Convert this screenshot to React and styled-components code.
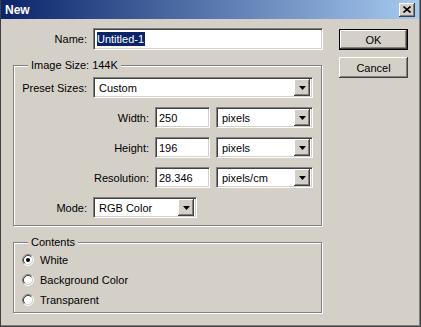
import React from 'react'
import styled, { css, createGlobalStyle } from 'styled-components'

const GlobalStyle = createGlobalStyle`
  html, body {
    margin: 0;
    padding: 0;
    background: #d4d0c8;
  }
  body {
    font-family: "Liberation Sans", Arial, sans-serif;
    font-size: 11px;
    color: #000;
  }
`

const sunken = css`
  box-sizing: border-box;
  background: #fff;
  border-top: 1px solid #808080;
  border-left: 1px solid #808080;
  border-bottom: 1px solid #fff;
  border-right: 1px solid #fff;
  box-shadow: inset 1px 1px 0 #404040, inset -1px -1px 0 #d4d0c8;
`

const raised = css`
  box-sizing: border-box;
  background: #d4d0c8;
  box-shadow: inset -1px -1px 0 #404040, inset 1px 1px 0 #fff,
    inset -2px -2px 0 #808080, inset 2px 2px 0 #d4d0c8;
`

const Window = styled.div`
  width: 421px;
  height: 327px;
  box-sizing: border-box;
  background: #d4d0c8;
  border-left: 1px solid #404040;
  border-right: 1px solid #404040;
  border-bottom: 1px solid #404040;
  box-shadow: inset -1px -1px 0 #808080;
  display: flex;
  flex-direction: column;
`

const TitleBar = styled.div`
  height: 19px;
  flex: none;
  display: flex;
  align-items: center;
  justify-content: space-between;
  padding: 0 4px 0 4px;
  margin-right: 1px;
  background: linear-gradient(to right, #0a246a, #a6caf0);
`

const Title = styled.span`
  color: #fff;
  font-weight: bold;
  font-size: 12px;
`

const CloseButton = styled.div`
  ${raised};
  width: 16px;
  height: 14px;
  display: flex;
  align-items: center;
  justify-content: center;
  padding-bottom: 1px;
`

const Body = styled.div`
  display: flex;
  padding: 9px 0 0 12px;
  gap: 16px;
`

const MainColumn = styled.div`
  width: 310px;
  display: flex;
  flex-direction: column;
`

const ButtonColumn = styled.div`
  display: flex;
  flex-direction: column;
  gap: 7px;
  padding-top: 1px;
`

const PushButton = styled.div`
  ${raised};
  width: 69px;
  height: 21px;
  display: flex;
  align-items: center;
  justify-content: center;
  ${(p) => p.$default && css`
    border: 1px solid #000;
  `}
`

const FieldRow = styled.div`
  display: flex;
  align-items: center;
  gap: 6px;
  height: ${(p) => p.$height || 21}px;
`

const Label = styled.span`
  width: ${(p) => p.$width}px;
  flex: none;
  text-align: right;
`

const TextBox = styled.div`
  ${sunken};
  width: ${(p) => p.$width}px;
  height: 100%;
  display: flex;
  align-items: center;
  padding-left: 3px;
`

const Selected = styled.span`
  background: #0a246a;
  color: #fff;
  line-height: 14px;
  padding-right: 1px;
`

const DropDown = styled.div`
  ${sunken};
  width: ${(p) => p.$width}px;
  height: 21px;
  padding: 2px;
  display: flex;
  align-items: center;
`

const DropText = styled.span`
  flex: 1;
  padding-left: 3px;
`

const DropButton = styled.div`
  ${raised};
  width: 16px;
  height: 17px;
  display: flex;
  align-items: center;
  justify-content: center;
`

const GroupBox = styled.div`
  position: relative;
  box-sizing: border-box;
  width: 309px;
  margin-top: ${(p) => p.$top}px;
  border: 1px solid #808080;
  box-shadow: inset 1px 1px 0 #fff, 1px 1px 0 #fff;
  display: flex;
  flex-direction: column;
  gap: ${(p) => p.$gap || 0}px;
  padding: ${(p) => p.$padding};
`

const Legend = styled.span`
  position: absolute;
  top: -8px;
  left: 14px;
  padding: 0 3px;
  line-height: 14px;
  background: #d4d0c8;
`

const RadioRow = styled.div`
  height: 20px;
  display: flex;
  align-items: center;
  gap: 6px;
  padding-left: 8px;
`

const Arrow = () => (
  <svg width="7" height="4" viewBox="0 0 7 4">
    <path d="M0 0h7L3.5 4z" fill="#000" />
  </svg>
)

const CloseGlyph = () => (
  <svg width="8" height="7" viewBox="0 0 8 7">
    <path d="M0.5 0.5l7 6M7.5 0.5l-7 6" stroke="#000" strokeWidth="1.6" />
  </svg>
)

const RadioMark = ({ checked }) => (
  <svg width="12" height="12" viewBox="0 0 12 12">
    <circle cx="6" cy="6" r="4.5" fill="#fff" />
    <path d="M2.11 9.89A5.5 5.5 0 0 1 9.89 2.11" stroke="#808080" fill="none" />
    <path d="M9.89 2.11A5.5 5.5 0 0 1 2.11 9.89" stroke="#fff" fill="none" />
    <path d="M2.82 9.18A4.5 4.5 0 0 1 9.18 2.82" stroke="#404040" fill="none" />
    <path d="M9.18 2.82A4.5 4.5 0 0 1 2.82 9.18" stroke="#d4d0c8" fill="none" />
    {checked && <circle cx="6" cy="6" r="2" fill="#000" />}
  </svg>
)

const Select = ({ width, value }) => (
  <DropDown $width={width}>
    <DropText>{value}</DropText>
    <DropButton>
      <Arrow />
    </DropButton>
  </DropDown>
)

const units = [
  { label: 'Width:', value: '250', unit: 'pixels' },
  { label: 'Height:', value: '196', unit: 'pixels' },
  { label: 'Resolution:', value: '28.346', unit: 'pixels/cm' },
]

const contents = [
  { label: 'White', checked: true },
  { label: 'Background Color' },
  { label: 'Transparent' },
]

const App = () => {
  return (
    <Window>
      <GlobalStyle />
      <TitleBar>
        <Title>New</Title>
        <CloseButton>
          <CloseGlyph />
        </CloseButton>
      </TitleBar>
      <Body>
        <MainColumn>
          <FieldRow $height={22}>
            <Label $width={74}>Name:</Label>
            <TextBox $width={230}>
              <Selected>Untitled-1</Selected>
            </TextBox>
          </FieldRow>

          <GroupBox $top={15} $gap={9} $padding="11px 0 7px 0">
            <Legend>Image Size: 144K</Legend>
            <FieldRow>
              <Label $width={73}>Preset Sizes:</Label>
              <Select width={220} value="Custom" />
            </FieldRow>
            {units.map((u) => (
              <FieldRow key={u.label}>
                <Label $width={135}>{u.label}</Label>
                <TextBox $width={55}>{u.value}</TextBox>
                <Select width={97} value={u.unit} />
              </FieldRow>
            ))}
            <FieldRow>
              <Label $width={73}>Mode:</Label>
              <Select width={104} value="RGB Color" />
            </FieldRow>
          </GroupBox>

          <GroupBox $top={16} $padding="7px 0 2px 0">
            <Legend>Contents</Legend>
            {contents.map((c) => (
              <RadioRow key={c.label}>
                <RadioMark checked={c.checked} />
                {c.label}
              </RadioRow>
            ))}
          </GroupBox>
        </MainColumn>

        <ButtonColumn>
          <PushButton $default>OK</PushButton>
          <PushButton>Cancel</PushButton>
        </ButtonColumn>
      </Body>
    </Window>
  )
}

export default App
